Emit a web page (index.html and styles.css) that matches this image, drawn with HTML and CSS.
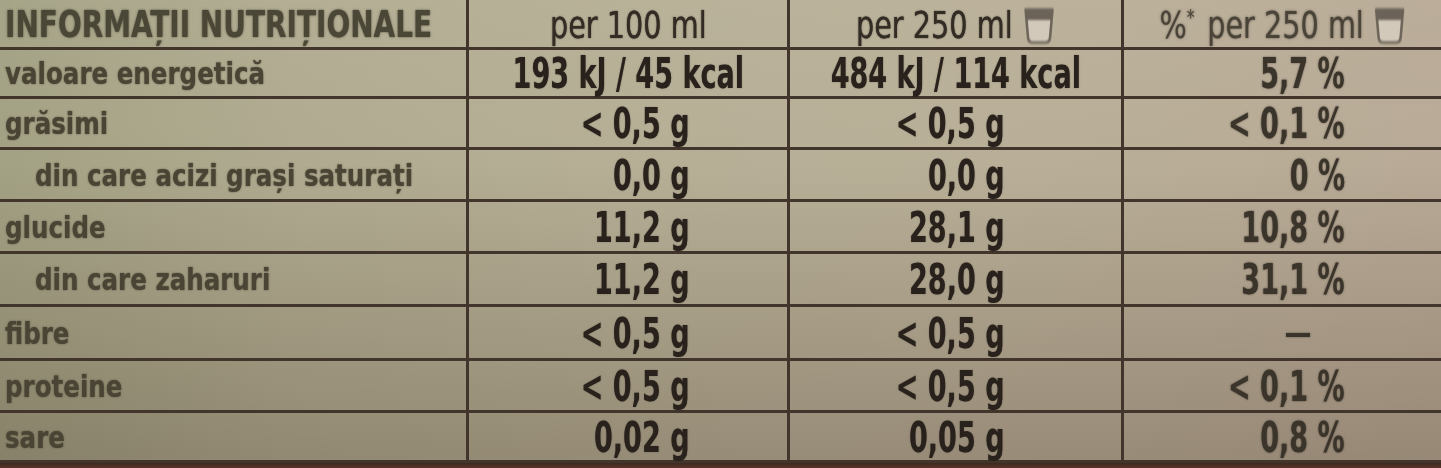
FILE: index.html
```html
<!DOCTYPE html>
<html lang="ro">
<head>
<meta charset="utf-8">
<title>Informații nutriționale</title>
<link rel="stylesheet" href="styles.css">
</head>
<body>
<div class="label">
  <div class="table">
    <div class="cell name head r0"><span class="t">INFORMAȚII NUTRIȚIONALE</span></div>
    <div class="cell c2 center head r0"><span class="t">per 100 ml</span></div>
    <div class="cell c3 center head r0"><span class="t">per 250 ml<svg class="cup" viewBox="0 0 32 38" preserveAspectRatio="none" aria-hidden="true"><path class="cup-body" d="M2.5 2.5 H29.5 L27 31 Q26.5 35.5 22 35.5 H10 Q5.5 35.5 5 31 Z"/><path class="cup-fill" d="M2.5 2.5 H29.5 L28.6 13 H3.4 Z"/></svg></span></div>
    <div class="cell c4 center head pct r0"><span class="t">%<sup>*</sup> per 250 ml<svg class="cup" viewBox="0 0 32 38" preserveAspectRatio="none" aria-hidden="true"><path class="cup-body" d="M2.5 2.5 H29.5 L27 31 Q26.5 35.5 22 35.5 H10 Q5.5 35.5 5 31 Z"/><path class="cup-fill" d="M2.5 2.5 H29.5 L28.6 13 H3.4 Z"/></svg></span></div>

    <div class="cell name r1"><span class="t">valoare energetică</span></div>
    <div class="cell c2 center r1"><span class="t">193 kJ / 45 kcal</span></div>
    <div class="cell c3 center r1"><span class="t">484 kJ / 114 kcal</span></div>
    <div class="cell c4 pct r1"><span class="t">5,7 %</span></div>

    <div class="cell name r2"><span class="t">grăsimi</span></div>
    <div class="cell c2 r2"><span class="t">&lt; 0,5 g</span></div>
    <div class="cell c3 r2"><span class="t">&lt; 0,5 g</span></div>
    <div class="cell c4 pct r2"><span class="t">&lt; 0,1 %</span></div>

    <div class="cell name sub r3"><span class="t">din care acizi grași saturați</span></div>
    <div class="cell c2 r3"><span class="t">0,0 g</span></div>
    <div class="cell c3 r3"><span class="t">0,0 g</span></div>
    <div class="cell c4 pct r3"><span class="t">0 %</span></div>

    <div class="cell name r4"><span class="t">glucide</span></div>
    <div class="cell c2 r4"><span class="t">11,2 g</span></div>
    <div class="cell c3 r4"><span class="t">28,1 g</span></div>
    <div class="cell c4 pct r4"><span class="t">10,8 %</span></div>

    <div class="cell name sub r5"><span class="t">din care zaharuri</span></div>
    <div class="cell c2 r5"><span class="t">11,2 g</span></div>
    <div class="cell c3 r5"><span class="t">28,0 g</span></div>
    <div class="cell c4 pct r5"><span class="t">31,1 %</span></div>

    <div class="cell name r6"><span class="t">fibre</span></div>
    <div class="cell c2 r6"><span class="t">&lt; 0,5 g</span></div>
    <div class="cell c3 r6"><span class="t">&lt; 0,5 g</span></div>
    <div class="cell c4 pct dash r6"><span class="d"></span></div>

    <div class="cell name r7"><span class="t">proteine</span></div>
    <div class="cell c2 r7"><span class="t">&lt; 0,5 g</span></div>
    <div class="cell c3 r7"><span class="t">&lt; 0,5 g</span></div>
    <div class="cell c4 pct r7"><span class="t">&lt; 0,1 %</span></div>

    <div class="cell name r8"><span class="t">sare</span></div>
    <div class="cell c2 r8"><span class="t">0,02 g</span></div>
    <div class="cell c3 r8"><span class="t">0,05 g</span></div>
    <div class="cell c4 pct r8"><span class="t">0,8 %</span></div>
  </div>
  <div class="edge"></div>
</div>
</body>
</html>
```

FILE: styles.css
```css
html, body {
  margin: 0;
  padding: 0;
  background: #4a2d23;
}

.label {
  width: 1441px;
  height: 468px;
  display: flex;
  flex-direction: column;
  overflow: hidden;
  background:
    linear-gradient(180deg, rgba(255,250,235,0.04) 0%, rgba(0,0,0,0) 35%, rgba(55,35,25,0.26) 100%),
    linear-gradient(90deg, #a3a184 0%, #b0ab90 20%, #b6af96 45%, #b9af98 70%, #b8aa96 100%);
  font-family: "DejaVu Sans Condensed", "DejaVu Sans", sans-serif;
  color: #29221c;
}

.table {
  display: grid;
  grid-template-columns: 466px 321px 334px 320px;
  grid-template-rows: 50px 49px 51px 52px 52px 53px 54px 52px 50px;
}

.cell {
  box-sizing: border-box;
  border-bottom: 3px solid #42352b;
  display: flex;
  align-items: center;
  justify-content: flex-end;
  font-size: 43px;
  font-weight: 700;
  white-space: nowrap;
}

.t {
  display: inline-block;
  transform: scaleX(0.7);
  transform-origin: right center;
  text-shadow: 0 0 1.5px rgba(41,34,28,0.55);
}

.c2, .c3, .c4 {
  border-left: 3px solid #42352b;
}

.c2 { padding-right: 97px; }
.c3 { padding-right: 116px; }
.c4 { padding-right: 96px; }

.center {
  justify-content: center;
  padding-right: 0;
}

.center .t {
  transform-origin: center center;
}

.head {
  font-size: 38px;
  font-weight: 400;
  color: #332c24;
  padding-top: 2px;
}

.head .t {
  transform: scaleX(0.84);
  text-shadow: 0 0 1px rgba(51,44,36,0.85), 0 0 2px rgba(51,44,36,0.45);
}

.name {
  justify-content: flex-start;
  padding-left: 5px;
  font-size: 31px;
  color: #4a4435;
}

.name .t {
  transform: scaleX(0.88);
  transform-origin: left center;
  text-shadow: 0 0 2px rgba(60,55,40,0.75);
}

.name.head {
  font-size: 37px;
  font-weight: 700;
  color: #4b4737;
}

.name.head .t {
  transform: scaleX(0.84);
  text-shadow: 0 0 2.5px rgba(60,55,40,0.8);
}

.sub {
  padding-left: 35px;
}

.pct {
  color: #3b342b;
}

.pct .t {
  text-shadow: 0 0 2.5px rgba(50,44,36,0.75);
}

.pct.head {
  color: #4a4338;
  padding-right: 0;
}

.pct.head .t {
  text-shadow: 0 0 2.5px rgba(60,52,42,0.8);
}

.dash {
  padding-right: 131px;
}

.d {
  display: block;
  width: 24px;
  height: 4px;
  margin-top: 4px;
  background: #3b342b;
  box-shadow: 0 0 2px rgba(50,44,36,0.7);
}

sup {
  font-size: 0.55em;
  vertical-align: 0;
  position: relative;
  top: -0.6em;
  margin-right: 4px;
}

.cup {
  display: inline-block;
  vertical-align: -7px;
  width: 38px;
  height: 38px;
  margin-left: 12px;
  filter: blur(0.8px);
}

.cup-body {
  fill: #d2c9ba;
  stroke: #6e665a;
  stroke-width: 2.6;
  stroke-linejoin: round;
}

.cup-fill {
  fill: #6b6358;
}

.edge {
  flex: 1;
  background: linear-gradient(180deg, #3d2a20, #5a3328);
}
```
